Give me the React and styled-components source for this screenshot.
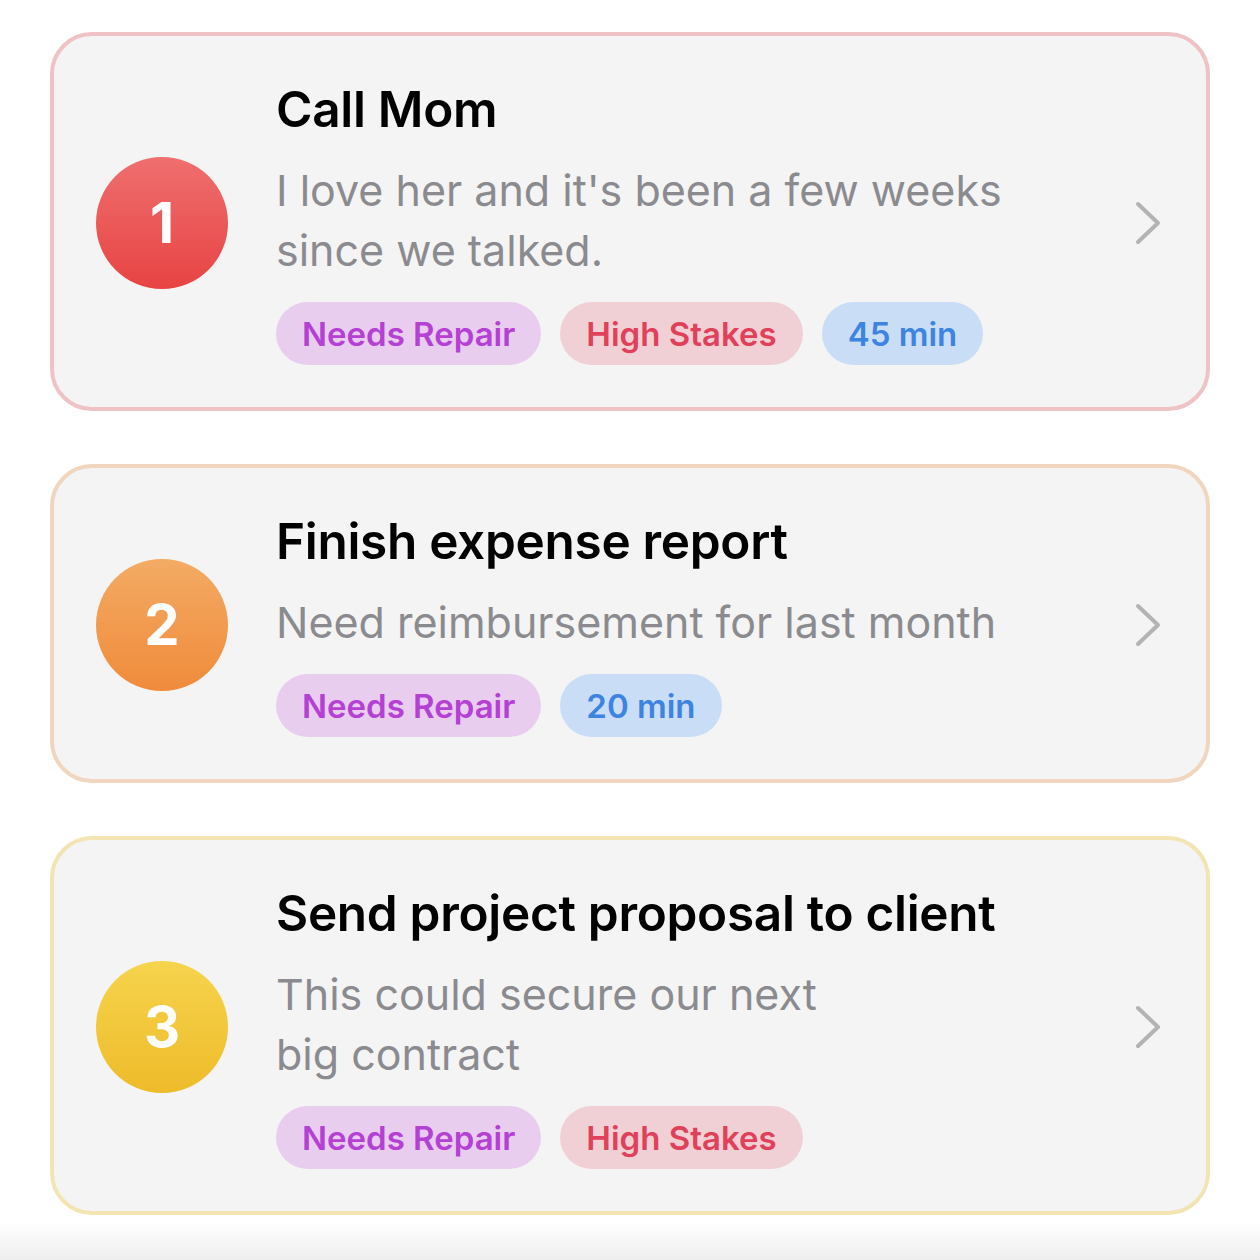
import React from 'react'
import styled, { createGlobalStyle } from 'styled-components'

const Global = createGlobalStyle`
  body {
    margin: 0;
    min-height: 1260px;
    background: linear-gradient(180deg, #ffffff 0, #ffffff 1222px, #eeeeef 1260px);
    font-family: Inter, "Noto Sans", "Liberation Sans", sans-serif;
  }
`

const tasks = [
  {
    n: 1,
    title: 'Call Mom',
    lines: ["I love her and it's been a few weeks", 'since we talked.'],
    tags: ['repair', 'stakes', '45 min'],
    tone: 'red',
  },
  {
    n: 2,
    title: 'Finish expense report',
    lines: ['Need reimbursement for last month'],
    tags: ['repair', '20 min'],
    tone: 'orange',
  },
  {
    n: 3,
    title: 'Send project proposal to client',
    lines: ['This could secure our next', 'big contract'],
    tags: ['repair', 'stakes'],
    tone: 'yellow',
  },
]

const tones = {
  red: { border: '#efc3c6', top: '#ef6f6f', bottom: '#e84343' },
  orange: { border: '#f1d6bf', top: '#f3ab64', bottom: '#f08b3b' },
  yellow: { border: '#f3e5b3', top: '#f6d44d', bottom: '#eebb2a' },
}

const pills = {
  repair: { bg: '#e8cdef', fg: '#b440d4', label: 'Needs Repair' },
  stakes: { bg: '#f1d0d5', fg: '#e1405a', label: 'High Stakes' },
  time: { bg: '#c9ddf6', fg: '#3d83e1' },
}

export default function App() {
  return (
    <>
      <Global />
      <Page>
        {tasks.map(t => <TaskCard key={t.n} task={t} />)}
      </Page>
    </>
  )
}

const TaskCard = ({ task }) => {
  const tone = tones[task.tone]
  return (
    <Card $border={tone.border}>
      <Badge $top={tone.top} $bottom={tone.bottom}>{task.n}</Badge>
      <Body>
        <Title>{task.title}</Title>
        <Desc>
          {task.lines.map((l, i) => <span key={i}>{l}</span>)}
        </Desc>
        <Tags>
          {task.tags.map(tag => {
            const p = pills[tag] || pills.time
            return <Pill key={tag} $bg={p.bg} $fg={p.fg}>{p.label || tag}</Pill>
          })}
        </Tags>
      </Body>
      <Chevron width="28" height="46" viewBox="0 0 28 46">
        <path d="M4 4 L24 23 L4 42" fill="none" stroke="#b3b3b6" strokeWidth="4" strokeLinecap="round" strokeLinejoin="round" />
      </Chevron>
    </Card>
  )
}

const Page = styled.div`
  padding: 32px 50px 40px;
  display: flex;
  flex-direction: column;
  gap: 53px;
`

const Card = styled.div`
  display: flex;
  align-items: center;
  background: #f4f4f5;
  border: 4px solid ${p => p.$border};
  border-radius: 42px;
  padding: 44px 44px 42px 42px;
`

const Badge = styled.div`
  flex: none;
  width: 132px;
  height: 132px;
  border-radius: 50%;
  background: linear-gradient(180deg, ${p => p.$top}, ${p => p.$bottom});
  color: #fff;
  font-size: 56px;
  font-weight: 700;
  display: flex;
  align-items: center;
  justify-content: center;
`

const Body = styled.div`
  flex: 1;
  margin-left: 48px;
  display: flex;
  flex-direction: column;
`

const Title = styled.div`
  font-size: 49.5px;
  font-weight: 600;
  color: #000;
  line-height: 58px;
  letter-spacing: -0.3px;
`

const Desc = styled.div`
  margin-top: 22px;
  font-size: 43px;
  line-height: 60px;
  color: #8b8b8f;
  display: flex;
  flex-direction: column;
`

const Tags = styled.div`
  margin-top: 22px;
  display: flex;
  gap: 19px;
`

const Pill = styled.span`
  height: 63px;
  padding: 0 26px;
  border-radius: 32px;
  background: ${p => p.$bg};
  color: ${p => p.$fg};
  font-size: 33px;
  font-weight: 600;
  display: flex;
  align-items: center;
`

const Chevron = styled.svg`
  flex: none;
  margin-left: 20px;
`
